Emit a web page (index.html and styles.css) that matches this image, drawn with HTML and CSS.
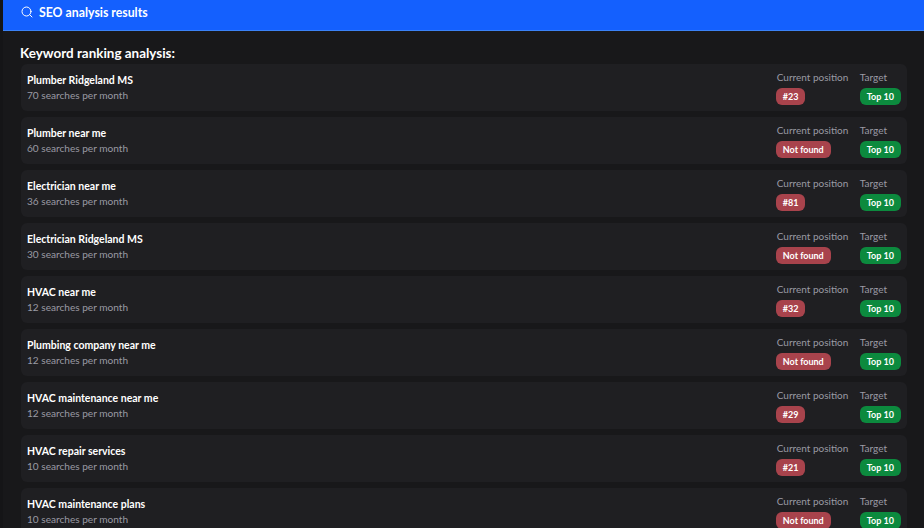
FILE: index.html
```html
<!DOCTYPE html>
<html lang="en">
<head>
    <meta charset="UTF-8">
    <meta name="viewport" content="width=device-width, initial-scale=1.0">
    <title>SEO analysis results</title>
    <link rel="stylesheet" href="styles.css">
</head>
<body>
    <div class="panel">
        <div class="panel-header">
            <svg class="search-icon" viewBox="0 0 24 24" width="12" height="12" fill="none" stroke="currentColor" stroke-width="2" stroke-linecap="round" stroke-linejoin="round">
                <circle cx="11" cy="11" r="9"></circle>
                <path d="M22 22l-4.500-4.500"></path>
            </svg>
            <span>SEO analysis results</span>
        </div>

        <div class="panel-body">
            <h3>Keyword ranking analysis:</h3>

            <div class="keyword-row">
                <div class="keyword-info">
                    <div class="keyword-name">Plumber Ridgeland MS</div>
                    <div class="keyword-volume">70 searches per month</div>
                </div>
                <div class="rank-col rank-current">
                    <div class="rank-label">Current position</div>
                    <span class="badge badge-red">#23</span>
                </div>
                <div class="rank-col">
                    <div class="rank-label">Target</div>
                    <span class="badge badge-green">Top 10</span>
                </div>
            </div>

            <div class="keyword-row">
                <div class="keyword-info">
                    <div class="keyword-name">Plumber near me</div>
                    <div class="keyword-volume">60 searches per month</div>
                </div>
                <div class="rank-col rank-current">
                    <div class="rank-label">Current position</div>
                    <span class="badge badge-red">Not found</span>
                </div>
                <div class="rank-col">
                    <div class="rank-label">Target</div>
                    <span class="badge badge-green">Top 10</span>
                </div>
            </div>

            <div class="keyword-row">
                <div class="keyword-info">
                    <div class="keyword-name">Electrician near me</div>
                    <div class="keyword-volume">36 searches per month</div>
                </div>
                <div class="rank-col rank-current">
                    <div class="rank-label">Current position</div>
                    <span class="badge badge-red">#81</span>
                </div>
                <div class="rank-col">
                    <div class="rank-label">Target</div>
                    <span class="badge badge-green">Top 10</span>
                </div>
            </div>

            <div class="keyword-row">
                <div class="keyword-info">
                    <div class="keyword-name">Electrician Ridgeland MS</div>
                    <div class="keyword-volume">30 searches per month</div>
                </div>
                <div class="rank-col rank-current">
                    <div class="rank-label">Current position</div>
                    <span class="badge badge-red">Not found</span>
                </div>
                <div class="rank-col">
                    <div class="rank-label">Target</div>
                    <span class="badge badge-green">Top 10</span>
                </div>
            </div>

            <div class="keyword-row">
                <div class="keyword-info">
                    <div class="keyword-name">HVAC near me</div>
                    <div class="keyword-volume">12 searches per month</div>
                </div>
                <div class="rank-col rank-current">
                    <div class="rank-label">Current position</div>
                    <span class="badge badge-red">#32</span>
                </div>
                <div class="rank-col">
                    <div class="rank-label">Target</div>
                    <span class="badge badge-green">Top 10</span>
                </div>
            </div>

            <div class="keyword-row">
                <div class="keyword-info">
                    <div class="keyword-name">Plumbing company near me</div>
                    <div class="keyword-volume">12 searches per month</div>
                </div>
                <div class="rank-col rank-current">
                    <div class="rank-label">Current position</div>
                    <span class="badge badge-red">Not found</span>
                </div>
                <div class="rank-col">
                    <div class="rank-label">Target</div>
                    <span class="badge badge-green">Top 10</span>
                </div>
            </div>

            <div class="keyword-row">
                <div class="keyword-info">
                    <div class="keyword-name">HVAC maintenance near me</div>
                    <div class="keyword-volume">12 searches per month</div>
                </div>
                <div class="rank-col rank-current">
                    <div class="rank-label">Current position</div>
                    <span class="badge badge-red">#29</span>
                </div>
                <div class="rank-col">
                    <div class="rank-label">Target</div>
                    <span class="badge badge-green">Top 10</span>
                </div>
            </div>

            <div class="keyword-row">
                <div class="keyword-info">
                    <div class="keyword-name">HVAC repair services</div>
                    <div class="keyword-volume">10 searches per month</div>
                </div>
                <div class="rank-col rank-current">
                    <div class="rank-label">Current position</div>
                    <span class="badge badge-red">#21</span>
                </div>
                <div class="rank-col">
                    <div class="rank-label">Target</div>
                    <span class="badge badge-green">Top 10</span>
                </div>
            </div>

            <div class="keyword-row">
                <div class="keyword-info">
                    <div class="keyword-name">HVAC maintenance plans</div>
                    <div class="keyword-volume">10 searches per month</div>
                </div>
                <div class="rank-col rank-current">
                    <div class="rank-label">Current position</div>
                    <span class="badge badge-red">Not found</span>
                </div>
                <div class="rank-col">
                    <div class="rank-label">Target</div>
                    <span class="badge badge-green">Top 10</span>
                </div>
            </div>
        </div>
    </div>
</body>
</html>
```

FILE: styles.css
```css
html, body {
    height: 100%;
}

body {
    margin: 0;
    overflow: hidden;
    font-family: Lato, 'Noto Sans', sans-serif;
    background-color: #151517;
    color: #ffffff;
}

.panel {
    margin-left: 3px;
    height: 100%;
    background-color: #18181a;
}

.panel-header {
    height: 31px;
    padding-left: 18px;
    padding-bottom: 6px;
    display: flex;
    align-items: center;
    gap: 6px;
    box-sizing: border-box;
    background-color: #1460fe;
    border-bottom: 1px solid #3b82f6;
    font-size: 12.3px;
    font-weight: 700;
}

.search-icon {
    flex: none;
}

.panel-body {
    padding: 13px 17px 0 18px;
}

.panel-body h3 {
    margin: 0 0 2px -1px;
    font-size: 13.45px;
    line-height: 18px;
    font-weight: 700;
}

.keyword-row {
    height: 47px;
    box-sizing: border-box;
    margin-bottom: 6px;
    padding: 7px 6px 0 6px;
    display: flex;
    border-radius: 6px;
    background-color: #1f1f22;
}

.keyword-info {
    flex: 1;
    padding-top: 1px;
}

.keyword-name {
    font-size: 10.5px;
    line-height: 17px;
    font-weight: 700;
}

.keyword-volume {
    font-size: 10.1px;
    line-height: 13px;
    color: #9a9aa4;
}

.rank-col {
    display: flex;
    flex-direction: column;
    align-items: flex-start;
}

.rank-current {
    width: 84px;
}

.rank-current .rank-label {
    margin-left: 1px;
}

.rank-label {
    font-size: 10px;
    line-height: 12px;
    color: #9a9aa4;
    margin-bottom: 5px;
}

.badge {
    height: 17px;
    line-height: 17px;
    padding: 0 7px;
    border-radius: 6px;
    font-size: 9px;
    font-weight: 700;
}

.badge-red {
    background-color: #a8434c;
}

.badge-green {
    background-color: #0c8a3e;
}
```
